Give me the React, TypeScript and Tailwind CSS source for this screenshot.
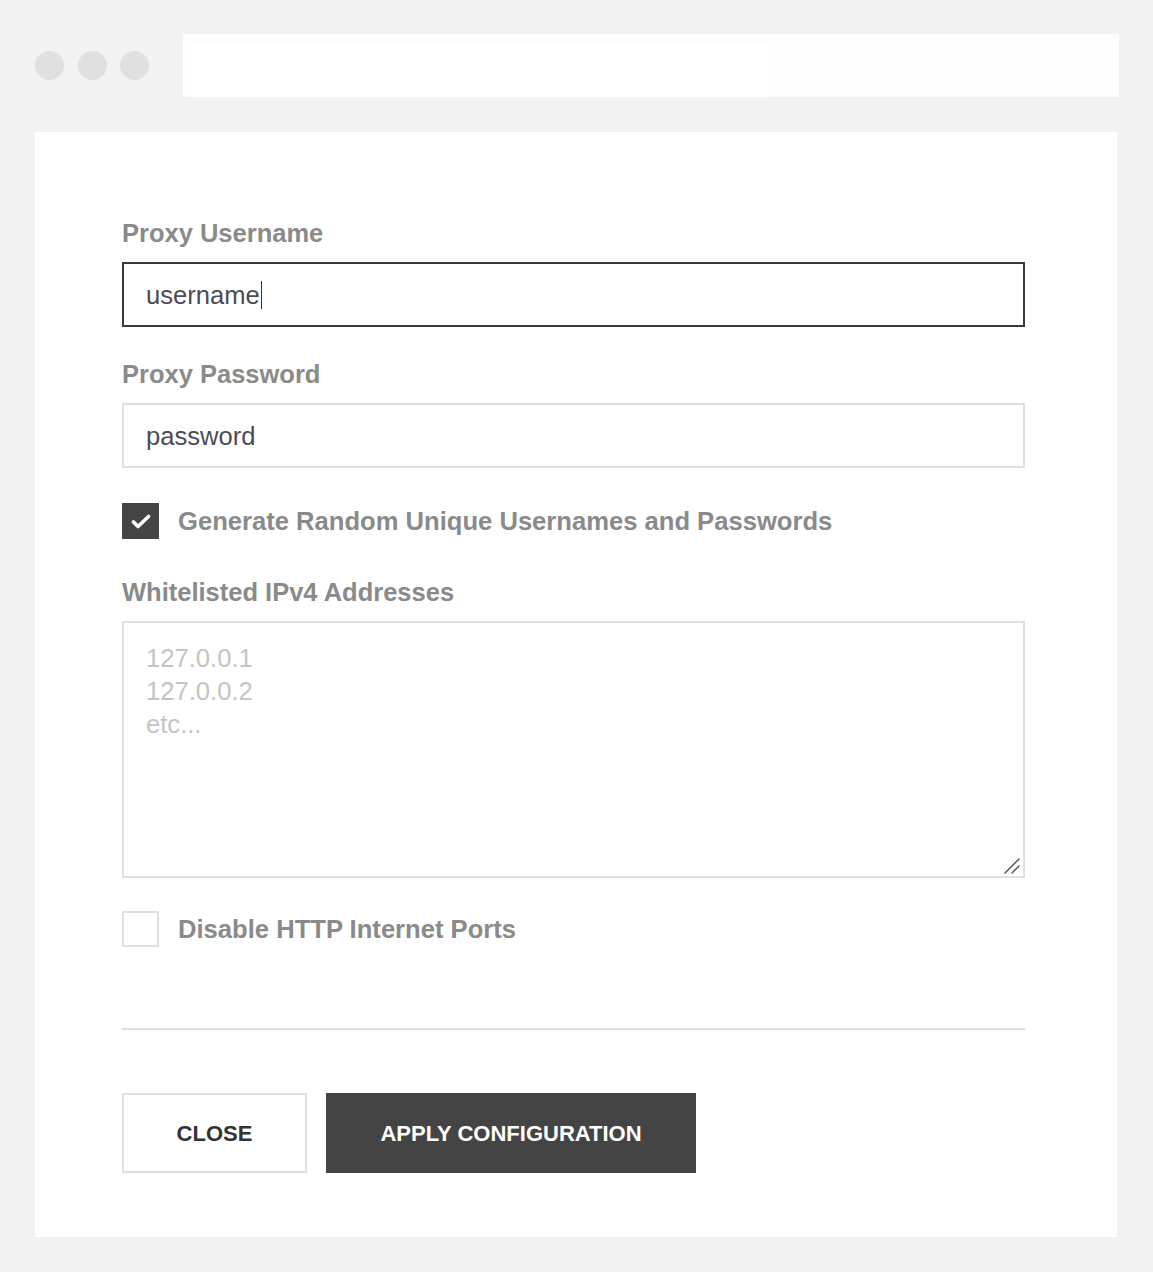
import React from 'react';

const labelCls = 'block text-[25.5px] leading-[30px] font-bold text-[#8a8a8a]';

const Check = () => (
  <svg width="20" height="15" viewBox="0 0 20 15" fill="none">
    <path d="M2.5 8l4.5 4.5L17.5 2.5" stroke="#fff" strokeWidth="3.6" strokeLinecap="round" strokeLinejoin="round" />
  </svg>
);

const Grip = () => (
  <svg width="18" height="18" viewBox="0 0 18 18" fill="none" className="absolute right-[4px] bottom-[3px] pointer-events-none">
    <path d="M2 16L16 2M9 16l7-7" stroke="#555" strokeWidth="1.5" strokeLinecap="round" />
  </svg>
);

export default function App() {
  return (
    <div className="min-h-[1272px] w-[1153px] bg-[#f2f2f2] pt-[34px] pb-[35px] pl-[35px] font-['Liberation_Sans',Arial,sans-serif]">
      {/* Fake browser bar */}
      <div className="flex items-center h-[63px]">
        <div className="flex items-center gap-[13.5px]">
          <span className="w-[29px] h-[29px] rounded-full bg-[#e0e0e0]" />
          <span className="w-[29px] h-[29px] rounded-full bg-[#e0e0e0]" />
          <span className="w-[29px] h-[29px] rounded-full bg-[#e0e0e0]" />
        </div>
        <div className="ml-[34px] w-[936px] h-[63px] bg-[#fdfdfd] pl-[10px] pt-[11px]">
          <div className="w-[575px] h-[52px] bg-white" />
        </div>
      </div>

      {/* Card */}
      <div className="mt-[35px] w-[1082px] h-[1105px] bg-white pt-[86px] pl-[87px] pb-[64px]">
        <div className="w-[903px]">
          <label className={labelCls}>Proxy Username</label>
          <div className="mt-[14px] h-[65px] border-2 border-[#3a3a3a] flex items-center pl-[22px] pt-[1px] text-[25.6px] text-[#4b4b55]">
            <span>username</span>
            <span className="ml-[1px] w-[1.5px] h-[28px] bg-[#333]" />
          </div>

          <label className={`${labelCls} mt-[32px]`}>Proxy Password</label>
          <input
            readOnly
            value="password"
            className="mt-[14px] w-full h-[65px] border-2 border-[#e0e0e0] pl-[22px] pt-[2px] text-[25.6px] text-[#4b4b55] outline-none bg-white"
          />

          <div className="mt-[35px] flex items-center h-[36px]">
            <span className="w-[37px] h-[36px] bg-[#444] flex items-center justify-center">
              <Check />
            </span>
            <span className="ml-[19px] text-[25.6px] font-bold text-[#8a8a8a]">
              Generate Random Unique Usernames and Passwords
            </span>
          </div>

          <label className={`${labelCls} mt-[38px]`}>Whitelisted IPv4 Addresses</label>
          <div className="relative mt-[14px]">
            <textarea
              placeholder={'127.0.0.1\n127.0.0.2\netc...'}
              className="block w-full h-[257px] resize-none border-2 border-[#e0e0e0] pt-[19px] pl-[22px] text-[25.6px] leading-[33px] text-[#4b4b55] placeholder:text-[#c4c4c4] outline-none bg-white"
            />
            <Grip />
          </div>

          <div className="mt-[33px] flex items-center h-[36px]">
            <span className="w-[37px] h-[36px] border-2 border-[#e0e0e0] bg-white" />
            <span className="ml-[19px] text-[25.6px] font-bold text-[#8a8a8a]">
              Disable HTTP Internet Ports
            </span>
          </div>

          <div className="mt-[81px] h-[2px] bg-[#e0e0e0]" />

          <div className="mt-[63px] flex gap-[19px]">
            <button className="w-[185px] h-[80px] border-2 border-[#e0e0e0] bg-white text-[22px] font-bold text-[#333]">
              CLOSE
            </button>
            <button className="w-[370px] h-[80px] bg-[#444] text-[22px] font-bold text-white">
              APPLY CONFIGURATION
            </button>
          </div>
        </div>
      </div>
    </div>
  );
}
